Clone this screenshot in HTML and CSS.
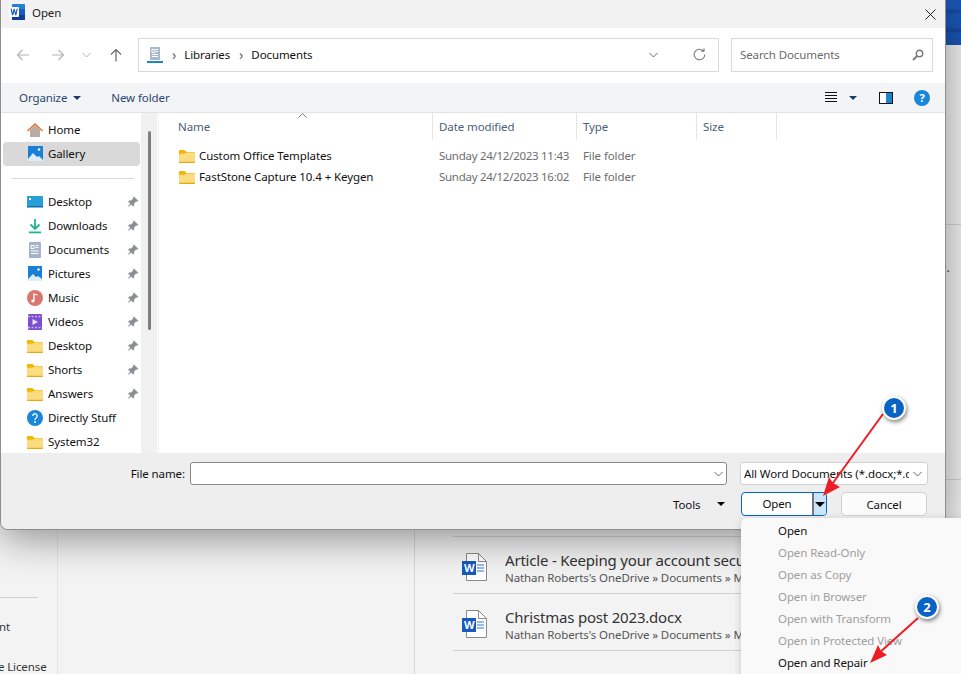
FILE: index.html
```html
<!DOCTYPE html>
<html lang="en">
<head>
    <meta charset="UTF-8">
    <meta name="viewport" content="width=device-width, initial-scale=1.0">
    <title>Open</title>
    <link rel="stylesheet" href="styles.css">
</head>
<body>
    <svg class="defs" width="0" height="0">
        <symbol id="i-folder" viewBox="0 0 16 14">
            <path d="M0 2a1 1 0 0 1 1-1h4.500l2 2H15a1 1 0 0 1 1 1v9a1 1 0 0 1-1 1H1a1 1 0 0 1-1-1z" fill="#f4b400"/>
            <path d="M0 5l6-.5 1.500-1H15a1 1 0 0 1 1 1V13a1 1 0 0 1-1 1H1a1 1 0 0 1-1-1z" fill="#fcdc80"/>
            <path d="M0 12.800h16V13a1 1 0 0 1-1 1H1a1 1 0 0 1-1-1z" fill="#e8a90f"/>
        </symbol>
        <symbol id="i-pin" viewBox="0 0 12 12">
            <path d="M7 .6l4.400 4.400-1.200.8-1-.2-2.200 2.200.1 1.800-1 1-2-2L1 11l-.3-.3 2.400-3.200-2-2 1-1 1.800.1L6.100 2.400l-.1-1z" fill="#8b8f94"/>
        </symbol>
        <symbol id="i-doc" viewBox="0 0 26 28">
            <path d="M4.500.5h12l8 8v19h-20z" fill="#fff" stroke="#8a8a8a"/>
            <path d="M16.500.5v8h8" fill="none" stroke="#8a8a8a"/>
            <path d="M15 12h7M15 15h7M15 18h7" stroke="#2b7cd3" stroke-width="1"/>
            <rect y="8" width="14" height="14" fill="#185abd"/>
        </symbol>
    </svg>

    <div class="screen">
        <!-- word backstage behind the dialog -->
        <div class="word">
            <div class="word-top"></div>
            <div class="word-body">
                <div class="side">
                    <div class="side-line"></div>
                    <div class="side-item">Account</div>
                    <div class="side-item">Office License</div>
                </div>
                <div class="center"></div>
                <div class="recent">
                    <div class="older"><span>Save.</span></div>
                    <div class="recent-row">
                        <svg class="doc-icon"><use href="#i-doc"/></svg>
                        <b class="doc-w one">W</b>
                        <div class="doc-text">
                            <div class="doc-name">Article - Keeping your account secure.docx</div>
                            <div class="doc-path">Nathan Roberts's OneDrive » Documents » Misc</div>
                        </div>
                    </div>
                    <div class="recent-row">
                        <svg class="doc-icon"><use href="#i-doc"/></svg>
                        <b class="doc-w two">W</b>
                        <div class="doc-text">
                            <div class="doc-name">Christmas post 2023.docx</div>
                            <div class="doc-path">Nathan Roberts's OneDrive » Documents » Misc</div>
                        </div>
                    </div>
                </div>
            </div>
        </div>

        <!-- open dialog -->
        <div class="dialog">
            <div class="titlebar">
                <svg class="word-logo" width="16" height="16" viewBox="0 0 16 16">
                    <rect x="3" y="0" width="13" height="16" rx="1" fill="#2b7cd3"/>
                    <rect x="3" y="5.300" width="13" height="5.400" fill="#185abd"/>
                    <path d="M3 10.700h13V15a1 1 0 0 1-1 1H4a1 1 0 0 1-1-1z" fill="#103f91"/>
                    <rect x="0" y="3" width="10" height="10" rx="1" fill="#fff"/>
                    <path d="M1.500 4.800h1.300l.9 4 1-4h1l1 4 .9-4h1.200l-1.500 6.400H6.200L5.200 7.400l-1 3.800H3z" fill="#185abd"/>
                </svg>
                <span class="title">Open</span>
                <svg class="close" width="11" height="11" viewBox="0 0 11 11"><path d="M.5.500l10 10M10.500.500l-10 10" stroke="#222" fill="none"/></svg>
            </div>

            <div class="addressbar">
                <svg class="nav-arrow" width="14" height="12" viewBox="0 0 14 12"><path d="M13 6H1.500M6.500 1l-5 5 5 5" stroke="#b4b4b4" stroke-width="1.200" fill="none"/></svg>
                <svg class="nav-arrow fwd" width="14" height="12" viewBox="0 0 14 12"><path d="M1 6h11.500M7.500 1l5 5-5 5" stroke="#b4b4b4" stroke-width="1.200" fill="none"/></svg>
                <svg class="nav-arrow down" width="9" height="6" viewBox="0 0 9 6"><path d="M.5 1l4 4 4-4" stroke="#b4b4b4" fill="none"/></svg>
                <svg class="nav-arrow up" width="12" height="14" viewBox="0 0 12 14"><path d="M6 13.500V1.500M1 6.500l5-5 5 5" stroke="#666" stroke-width="1.200" fill="none"/></svg>
                <div class="path-box">
                    <svg width="16" height="16" viewBox="0 0 16 16" class="lib-icon">
                        <rect x="3" y="0" width="10" height="13" fill="#a9b8cc"/>
                        <path d="M5 2.500h3v3H5zM9 2.500h2M9 4.500h2M5 7.500h6M5 9.500h6" stroke="#fff" fill="none"/>
                        <rect x="0" y="14" width="16" height="2" fill="#1a86d0"/>
                    </svg>
                    <span class="crumb-sep">›</span>
                    <span>Libraries</span>
                    <span class="crumb-sep">›</span>
                    <span>Documents</span>
                    <svg class="path-drop" width="9" height="6" viewBox="0 0 9 6"><path d="M.5 1l4 4 4-4" stroke="#666" fill="none"/></svg>
                    <svg class="refresh" width="13" height="13" viewBox="0 0 13 13"><path d="M11.800 6.500a5.300 5.300 0 1 1-1.700-3.900M11 .3v2.800H8.200" stroke="#777" stroke-width="1.100" fill="none"/></svg>
                </div>
                <div class="search-box">
                    <span>Search Documents</span>
                    <svg width="12" height="12" viewBox="0 0 12 12"><circle cx="7.500" cy="4.500" r="3.200" stroke="#777" stroke-width="1.400" fill="none"/><path d="M5 7L1 11" stroke="#777" stroke-width="1.800"/></svg>
                </div>
            </div>

            <div class="toolbar">
                <span class="tool">Organize</span>
                <i class="caret navy"></i>
                <span class="tool new-folder">New folder</span>
                <svg class="view-icon" width="12" height="11" viewBox="0 0 12 11"><path d="M0 .5h12M0 3.500h12M0 6.500h12M0 9.500h12" stroke="#111"/></svg>
                <i class="caret navy view-caret"></i>
                <svg class="pane-icon" width="14" height="12" viewBox="0 0 14 12"><rect x=".5" y=".5" width="13" height="11" fill="#fff" stroke="#111"/><rect x="7" y="1" width="6" height="10" fill="#1a86d0"/></svg>
                <span class="help">?</span>
            </div>

            <div class="browser">
                <div class="places">
                    <div class="place"><svg class="ico" viewBox="0 0 16 16"><path d="M3 8v7h10V8L8 3z" fill="#b7aca4"/><path d="M0 8.500L8 1l8 7.500-1 1L8 3 1 9.500z" fill="#e8742a"/></svg>Home</div>
                    <div class="place current"><svg class="ico" viewBox="0 0 16 16"><rect x="1" y="0" width="15" height="15" fill="#1a7fd6"/><path d="M1 13l5-6 4 4 2-1 4 4v1H1z" fill="#dcecf8"/><circle cx="12" cy="3.500" r="1.300" fill="#fff"/></svg>Gallery</div>
                    <div class="place-sep"></div>
                    <div class="place"><svg class="ico" viewBox="0 0 16 16"><rect y="2" width="16" height="11" rx="1" fill="#27a0d8"/><rect x="2" y="4" width="2" height="2" fill="#fff"/><rect y="12" width="16" height="1.500" fill="#0d6ea8"/></svg>Desktop<svg class="pin"><use href="#i-pin"/></svg></div>
                    <div class="place"><svg class="ico" viewBox="0 0 16 16"><path d="M8 1v9M3.500 6.500L8 11l4.500-4.500" stroke="#1fb58f" stroke-width="1.800" fill="none"/><rect x="2" y="13.500" width="12" height="1.800" fill="#1fb58f"/></svg>Downloads<svg class="pin"><use href="#i-pin"/></svg></div>
                    <div class="place"><svg class="ico" viewBox="0 0 16 16"><rect x="2" y="0" width="12" height="16" rx="1" fill="#a3b3c9"/><path d="M4 3.500h3v3H4zM8.500 3.500h3M8.500 5.500h3M4 9h7.500M4 11.500h7.500" stroke="#fff" fill="none"/></svg>Documents<svg class="pin"><use href="#i-pin"/></svg></div>
                    <div class="place"><svg class="ico" viewBox="0 0 16 16"><rect x="1" y="0" width="14" height="15" fill="#1a7fd6"/><path d="M1 13l5-5 3 3 2-1 4 3v2H1z" fill="#dcecf8"/><circle cx="11.500" cy="3.500" r="1.200" fill="#fff"/></svg>Pictures<svg class="pin"><use href="#i-pin"/></svg></div>
                    <div class="place"><svg class="ico" viewBox="0 0 16 16"><circle cx="8" cy="8" r="8" fill="#d9776f"/><path d="M7 11V4l3.500 1" stroke="#fff" stroke-width="1.300" fill="none"/><circle cx="5.800" cy="11" r="1.500" fill="#fff"/></svg>Music<svg class="pin"><use href="#i-pin"/></svg></div>
                    <div class="place"><svg class="ico" viewBox="0 0 16 16"><rect x="1" width="14" height="16" rx="1" fill="#7c4fd0"/><path d="M1 2.500h14M1 13.500h14" stroke="#c9b2f0" stroke-width="1.400" stroke-dasharray="2 1.500"/><path d="M5.500 5l5.500 3-5.500 3z" fill="#ece3fb"/></svg>Videos<svg class="pin"><use href="#i-pin"/></svg></div>
                    <div class="place"><svg class="ico"><use href="#i-folder"/></svg>Desktop<svg class="pin"><use href="#i-pin"/></svg></div>
                    <div class="place"><svg class="ico"><use href="#i-folder"/></svg>Shorts<svg class="pin"><use href="#i-pin"/></svg></div>
                    <div class="place"><svg class="ico"><use href="#i-folder"/></svg>Answers<svg class="pin"><use href="#i-pin"/></svg></div>
                    <div class="place"><svg class="ico" viewBox="0 0 16 16"><circle cx="8" cy="8" r="8" fill="#1a86d8"/><circle cx="8" cy="12" r="1" fill="#fff"/><path d="M5.800 6a2.200 2.200 0 1 1 3.400 1.800C8.500 8.300 8 8.700 8 10" stroke="#fff" stroke-width="1.300" fill="none"/></svg>Directly Stuff</div>
                    <div class="place"><svg class="ico"><use href="#i-folder"/></svg>System32</div>
                </div>
                <div class="places-scroll"><div class="thumb"></div></div>
                <div class="files">
                    <div class="file-head">
                        <div class="col col-name">Name<svg class="sort" width="9" height="5" viewBox="0 0 9 5"><path d="M.5 4.500l4-4 4 4" stroke="#777" fill="none"/></svg></div>
                        <div class="col col-date">Date modified</div>
                        <div class="col col-type">Type</div>
                        <div class="col col-size">Size</div>
                    </div>
                    <div class="file-row">
                        <div class="col col-name"><svg class="ico"><use href="#i-folder"/></svg>Custom Office Templates</div>
                        <div class="col col-date">Sunday 24/12/2023 11:43</div>
                        <div class="col col-type">File folder</div>
                    </div>
                    <div class="file-row">
                        <div class="col col-name"><svg class="ico"><use href="#i-folder"/></svg>FastStone Capture 10.4 + Keygen</div>
                        <div class="col col-date">Sunday 24/12/2023 16:02</div>
                        <div class="col col-type">File folder</div>
                    </div>
                </div>
            </div>

            <div class="footer">
                <div class="footer-line">
                    <label class="name-label" for="file-name">File name:</label>
                    <div class="name-box">
                        <input id="file-name" type="text">
                        <svg width="9" height="6" viewBox="0 0 9 6"><path d="M.5 1l4 4 4-4" stroke="#666" fill="none"/></svg>
                    </div>
                    <div class="filter-box">
                        <span>All Word Documents (*.docx;*.docm;*.dotx)</span>
                        <svg width="9" height="6" viewBox="0 0 9 6"><path d="M.5 1l4 4 4-4" stroke="#666" fill="none"/></svg>
                    </div>
                </div>
                <div class="footer-line actions">
                    <span class="tools">Tools</span>
                    <i class="caret dark"></i>
                    <div class="open-btn">
                        <span class="open-label">Open</span>
                        <span class="open-drop"><i class="caret black"></i></span>
                    </div>
                    <button class="cancel-btn">Cancel</button>
                </div>
            </div>
        </div>

        <!-- split button menu -->
        <div class="open-menu">
            <div class="menu-item">Open</div>
            <div class="menu-item off">Open Read-Only</div>
            <div class="menu-item off">Open as Copy</div>
            <div class="menu-item off">Open in Browser</div>
            <div class="menu-item off">Open with Transform</div>
            <div class="menu-item off">Open in Protected View</div>
            <div class="menu-item">Open and Repair</div>
        </div>

        <!-- annotations -->
        <svg class="marks" width="961" height="674" viewBox="0 0 961 674">
            <path d="M883 414L830 487" stroke="#ee1c25" stroke-width="2" fill="none"/>
            <path d="M823 496L840 487 833 483 829 477z" fill="#ee1c25"/>
            <path d="M918 618L878 654" stroke="#ee1c25" stroke-width="2" fill="none"/>
            <path d="M870 663L887 655 881 651 878 645z" fill="#ee1c25"/>
        </svg>
        <span class="badge badge-one">1</span>
        <span class="badge badge-two">2</span>
    </div>
</body>
</html>
```

FILE: styles.css
```css
* { margin: 0; padding: 0; box-sizing: border-box; }
body { font-family: "Noto Sans", "Open Sans", sans-serif; font-size: 11.5px; letter-spacing: -0.1px; color: #111; background: #f3f3f3; }
.defs { display: block; height: 0; }
.screen { position: relative; width: 961px; height: 674px; overflow: hidden; }

/* word backstage */
.word { display: flex; flex-direction: column; height: 100%; background: #f3f3f3; }
.word-top { height: 45px; background: linear-gradient(#1a56b5 0, #1a56b5 9px, #174a9c 10px, #174a9c 13px, #1a56b5 14px, #1a56b5 28px, #174a9c 29px, #174a9c 32px, #1a56b5 33px); }
.word-body { flex: 1; display: flex; min-height: 0; }
.side { width: 58px; border-right: 1px solid #e4e4e4; display: flex; flex-direction: column; justify-content: flex-end; overflow: hidden; }
.side-line { width: 38px; border-top: 1px solid #d0d0d0; margin-bottom: 20px; }
.side-item { margin-left: -33px; white-space: nowrap; line-height: 18px; color: #333; margin-bottom: 22px; }
.side-item:last-child { margin-bottom: -2px; margin-left: -27px; }
.center { width: 357px; border-right: 1px solid #d6d6d6; }
.recent { flex: 1; padding-left: 38px; min-width: 0; }
.older { height: 256px; margin-top: 179px; border-top: 1px solid #d4d4d4; border-bottom: 1px solid #d4d4d4; margin-bottom: 56px; text-align: right; padding: 33px 11px 0 0; font-size: 13px; color: #444; }
.recent-row { position: relative; display: flex; align-items: center; height: 57px; border-top: 1px solid #d2d2d2; padding: 5px 0 0 9px; }
.recent-row:last-child { border-bottom: 1px solid #d2d2d2; height: 58px; }
.doc-icon { width: 26px; height: 28px; margin: -2px 17px 0 0; flex: none; }
.doc-w { position: absolute; left: 11px; top: 24px; color: #fff; font-size: 11px; line-height: 14px; }
.doc-text { white-space: nowrap; overflow: hidden; }
.doc-name { font-size: 15px; letter-spacing: -0.2px; line-height: 20px; color: #333; }
.doc-path { line-height: 16px; color: #555; }

/* dialog window */
.dialog { position: absolute; left: 0; top: 0; width: 946px; height: 530px; display: flex; flex-direction: column; background: #eee; border: 1px solid #8e8e8e; border-top: 0; border-radius: 0 0 8px 8px; box-shadow: 0 8px 40px rgba(0,0,0,0.42); overflow: hidden; }
.titlebar { height: 28px; flex: none; display: flex; align-items: center; background: #f2f2f3; padding: 0 9px 4px 8px; }
.title { margin-left: 7px; color: #222; }
.close { margin-left: auto; margin-top: 4px; }
.addressbar { height: 55px; flex: none; display: flex; align-items: center; background: #fff; padding: 0 12px 2px 15px; }
.nav-arrow { flex: none; margin-right: 21px; }
.nav-arrow.fwd { margin-right: 22px; }
.nav-arrow.down { margin-left: -5px; margin-right: 19px; }
.nav-arrow.up { margin-right: 16px; }
.path-box { width: 581px; height: 34px; display: flex; align-items: center; gap: 8px; border: 1px solid #d9d9d9; padding: 0 12px 0 8px; white-space: nowrap; }
.crumb-sep { color: #666; font-size: 14px; line-height: 14px; margin-left: 1px; }
.path-drop { margin-left: auto; margin-right: 27px; }
.search-box { width: 202px; height: 34px; margin-left: 12px; display: flex; align-items: center; justify-content: space-between; border: 1px solid #d9d9d9; padding: 0 8px; color: #6b6b6b; }
.toolbar { height: 30px; flex: none; display: flex; align-items: center; background: #f3f4f6; border-bottom: 1px solid #e3e3e3; padding: 0 15px 0 18px; }
.tool { color: #2c4770; }
.new-folder { margin-left: 30px; }
.caret { display: inline-block; width: 0; height: 0; border-left: 4px solid transparent; border-right: 4px solid transparent; border-top: 4px solid #000; }
.caret.navy { border-top-color: #1a3a6a; margin-left: 6px; }
.view-icon { margin-left: auto; }
.caret.view-caret { margin-left: 12px; }
.pane-icon { margin-left: 22px; }
.help { width: 16px; height: 16px; margin-left: 21px; border-radius: 50%; background: #1a86d8; color: #fff; font-size: 11px; font-weight: 700; line-height: 16px; text-align: center; }

/* places + file list */
.browser { height: 340px; flex: none; display: flex; background: #fff; }
.places { width: 140px; padding: 5px 1px 0 2px; overflow: hidden; flex: none; }
.place { position: relative; display: flex; align-items: center; height: 24px; padding-left: 24px; padding-bottom: 1px; white-space: nowrap; color: #111; }
.place.current { background: #d9d9d9; border-radius: 4px; }
.place-sep { height: 1px; background: #d8d8d8; margin: 12px 8px 11px 9px; width: 122px; }
.ico { width: 16px; height: 16px; margin-right: 5px; flex: none; }
.pin { position: absolute; left: 124px; top: 6px; width: 12px; height: 12px; }
.places-scroll { width: 16px; background: #f0f0f0; flex: none; padding: 18px 0 0 7px; }
.thumb { width: 3px; height: 199px; background: #7f7f7f; border-radius: 2px; }
.files { flex: 1; margin-left: 1px; border-left: 1px solid #f2f2f2; min-width: 0; }
.file-head { display: flex; height: 27px; color: #4c607a; }
.file-head .col { border-right: 1px solid #e5e5e5; line-height: 27px; }
.col { flex: none; padding-left: 6px; white-space: nowrap; }
.col-name { position: relative; width: 274px; padding-left: 19px; }
.col-date { width: 144px; }
.col-type { width: 120px; }
.col-size { width: 80px; }
.sort { position: absolute; left: 139px; top: 0; }
.file-row { display: flex; height: 21px; align-items: center; color: #6d6d6d; }
.file-row .col-date { letter-spacing: -0.28px; }
.file-row:nth-child(2) { margin-top: 5px; }
.file-row .col-name { display: flex; align-items: center; color: #111; padding-left: 20px; }
.file-row .ico { margin-right: 4px; }

/* bottom of dialog */
.footer { flex: 1; padding-top: 9px; background: #eee; }
.footer-line { display: flex; align-items: center; height: 23px; }
.name-label { width: 184px; text-align: right; }
.name-box { width: 537px; height: 23px; margin-left: 5px; display: flex; align-items: center; justify-content: space-between; background: #fff; border: 1px solid #8a8a8a; border-radius: 3px; padding-right: 3px; }
.name-box input { flex: 1; border: 0; outline: 0; background: transparent; height: 19px; }
.filter-box { width: 188px; height: 23px; margin-left: 13px; display: flex; align-items: center; background: #fff; border: 1px solid #d0d0d0; border-radius: 3px; padding: 0 5px 0 3px; gap: 4px; }
.filter-box span { flex: 1; overflow: hidden; white-space: nowrap; }
.actions { height: 24px; margin-top: 7px; }
.tools { margin-left: 672px; width: 34px; }
.caret.dark { margin-left: 10px; }
.caret.black { border-left-width: 5px; border-right-width: 5px; border-top-width: 5px; }
.open-btn { display: flex; width: 86px; height: 24px; margin-left: 16px; border: 1px solid #0067c0; border-radius: 4px; background: #fff; overflow: hidden; }
.open-label { flex: 1; text-align: center; line-height: 21px; }
.open-drop { width: 14px; display: flex; align-items: center; justify-content: center; background: #cce4f7; border-left: 2px solid #777; }
.cancel-btn { width: 86px; height: 24px; margin-left: 14px; background: #fbfbfb; border: 1px solid #d0d0d0; border-radius: 4px; font: inherit; letter-spacing: inherit; color: #111; }

/* menu */
.open-menu { position: absolute; left: 741px; top: 518px; width: 240px; height: 170px; padding-top: 2px; background: #f9f9f9; border-radius: 6px; box-shadow: 0 2px 8px rgba(0,0,0,0.18); }
.menu-item { height: 22px; line-height: 22px; padding-left: 37px; color: #111; white-space: nowrap; }
.menu-item.off { color: #9e9e9e; }

/* annotations */
.marks { position: absolute; left: 0; top: 0; pointer-events: none; }
.badge { position: absolute; width: 24px; height: 24px; border-radius: 50%; background: #0a62c4; border: 2px solid #fff; box-shadow: 1px 2px 4px rgba(0,0,0,0.5); color: #fff; font-size: 13px; font-weight: 700; line-height: 20px; text-align: center; }
.badge-one { left: 882px; top: 396px; }
.badge-two { left: 915px; top: 595px; }
```
